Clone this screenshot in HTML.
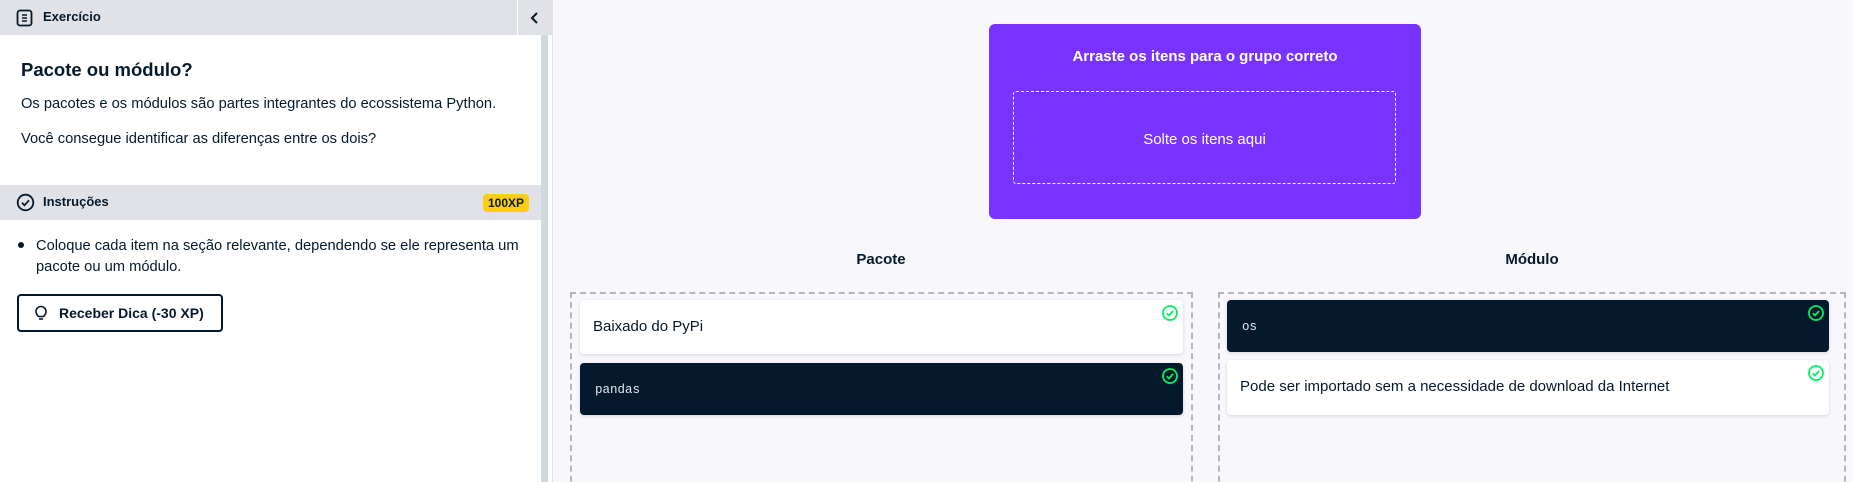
<!DOCTYPE html>
<html><head><meta charset="utf-8"><style>
*{box-sizing:border-box;margin:0;padding:0}
html,body{width:1853px;height:482px;overflow:hidden}
body{background:#f7f7fc;font-family:"Liberation Sans",sans-serif;color:#05192d;position:relative}
.abs{position:absolute}
.left{left:0;top:0;width:553px;height:482px;background:#fff;border-right:1px solid #e1e1e8}
.hdr{left:0;top:0;width:553px;height:35px;background:#e1e2e7}
.bar{left:0;top:185px;width:541px;height:35px;background:#e1e2e7}
.sb{left:541px;top:35px;width:7px;height:447px;background:#d0d8e0}
.p{font-size:14.7px;left:21px}
.card{border-radius:4px;box-shadow:0 1px 3px rgba(0,0,0,.15);background:#fff}
.dark{background:#05192d;color:#e5e8ec;font-family:"Liberation Mono",monospace;font-size:12.5px}
.chk{position:absolute;right:4px;top:4px}
</style></head><body>
<div class="abs left"></div>
<div class="abs hdr"></div>
<div class="abs" style="left:517px;top:0;width:1px;height:35px;background:#fff"></div>
<svg class="abs" style="left:16px;top:9px" width="18" height="18" viewBox="0 0 18 18"><rect x="1.5" y="1.5" width="14" height="15" rx="2.5" fill="none" stroke="#05192d" stroke-width="1.8"/><path d="M6 6h5M6 9h5M6 12h5" stroke="#05192d" stroke-width="1.5"/></svg>
<div class="abs" style="left:43px;top:9px;font-size:13px;font-weight:bold">Exercício</div>
<svg class="abs" style="left:530px;top:11px" width="10" height="14"><path d="M7 2L2 7l5 5" fill="none" stroke="#05192d" stroke-width="2"/></svg>
<div class="abs" style="left:21px;top:59px;font-size:18.5px;font-weight:bold">Pacote ou módulo?</div>
<div class="abs p" style="top:96px">Os pacotes e os módulos são partes integrantes do ecossistema Python.</div>
<div class="abs p" style="top:131px">Você consegue identificar as diferenças entre os dois?</div>
<div class="abs bar"></div>
<svg class="abs" style="left:16px;top:193px" width="20" height="20" viewBox="0 0 20 20"><circle cx="9.5" cy="9.5" r="7.8" fill="none" stroke="#05192d" stroke-width="1.8"/><path d="M6 9.8l2.5 2.5 4.5-5" fill="none" stroke="#05192d" stroke-width="1.8"/></svg>
<div class="abs" style="left:43px;top:194px;font-size:13px;font-weight:bold">Instruções</div>
<div class="abs" style="left:483px;top:194px;width:46px;height:18px;background:#fcce0d;border-radius:4px;font-size:12px;font-weight:bold;text-align:center;line-height:18px">100XP</div>
<div class="abs" style="left:18px;top:242px;width:6px;height:6px;border-radius:50%;background:#05192d"></div>
<div class="abs p" style="left:36px;top:236px;line-height:21px;width:500px">Coloque cada item na seção relevante, dependendo se ele representa um pacote ou um módulo.</div>
<div class="abs" style="left:17px;top:294px;width:206px;height:38px;border:2px solid #05192d;border-radius:4px;font-size:14px;font-weight:bold;line-height:34px;padding-left:40px">Receber Dica (-30 XP)</div>
<svg class="abs" style="left:34px;top:304px" width="14" height="18" viewBox="0 0 14 18"><path d="M4.5 12.5C3 11 2 9.5 2 7.5a5 5 0 0110 0c0 2-1 3.5-2.5 5z" fill="none" stroke="#05192d" stroke-width="1.6"/><path d="M5 15h4" stroke="#05192d" stroke-width="1.6"/></svg>
<div class="abs sb"></div>

<div class="abs" style="left:989px;top:24px;width:432px;height:195px;background:#7933ff;border-radius:6px"></div>
<div class="abs" style="left:989px;top:48px;width:432px;text-align:center;color:#fff;font-weight:bold;font-size:15px">Arraste os itens para o grupo correto</div>
<div class="abs" style="left:1013px;top:91px;width:383px;height:93px;border:1px dashed #fff;border-radius:3px;color:#fff;font-size:15px;text-align:center;line-height:95px">Solte os itens aqui</div>

<div class="abs" style="left:570px;top:251px;width:622px;text-align:center;font-weight:bold;font-size:15px">Pacote</div>
<div class="abs" style="left:1218px;top:251px;width:628px;text-align:center;font-weight:bold;font-size:15px">Módulo</div>
<div class="abs" style="left:570px;top:292px;width:623px;height:200px;border:2px dashed #b4b6bf;border-bottom:none"></div>
<div class="abs" style="left:1218px;top:292px;width:628px;height:200px;border:2px dashed #b4b6bf;border-bottom:none"></div>

<div class="abs card" style="left:580px;top:300px;width:603px;height:54px;font-size:15px;padding:18px 0 0 13px">Baixado do PyPi<svg class="chk" width="18" height="18"><circle cx="9" cy="9" r="7" fill="none" stroke="#03ef62" stroke-width="1.8"/><path d="M5.8 9.2l2.2 2.2 4-4.4" fill="none" stroke="#03ef62" stroke-width="1.8"/></svg></div>
<div class="abs card dark" style="left:580px;top:363px;width:603px;height:52px;padding:20px 0 0 15px">pandas<svg class="chk" width="18" height="18"><circle cx="9" cy="9" r="7" fill="none" stroke="#03ef62" stroke-width="1.8"/><path d="M5.8 9.2l2.2 2.2 4-4.4" fill="none" stroke="#03ef62" stroke-width="1.8"/></svg></div>
<div class="abs card dark" style="left:1227px;top:300px;width:602px;height:52px;padding:20px 0 0 15px">os<svg class="chk" width="18" height="18"><circle cx="9" cy="9" r="7" fill="none" stroke="#03ef62" stroke-width="1.8"/><path d="M5.8 9.2l2.2 2.2 4-4.4" fill="none" stroke="#03ef62" stroke-width="1.8"/></svg></div>
<div class="abs card" style="left:1227px;top:360px;width:602px;height:55px;font-size:15px;padding:18px 0 0 13px">Pode ser importado sem a necessidade de download da Internet<svg class="chk" width="18" height="18"><circle cx="9" cy="9" r="7" fill="none" stroke="#03ef62" stroke-width="1.8"/><path d="M5.8 9.2l2.2 2.2 4-4.4" fill="none" stroke="#03ef62" stroke-width="1.8"/></svg></div>
</body></html>
